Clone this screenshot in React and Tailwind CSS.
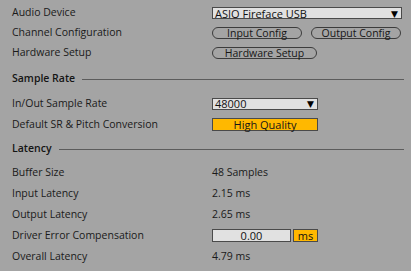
const Row = ({ label, children, h = 'h-[21px]' }) => (
  <div className={`flex items-center ${h}`}>
    <div className="w-[200px] shrink-0 text-[#1a1a1a] font-medium">{label}</div>
    <div className="flex items-center">{children}</div>
  </div>
);

const Heading = ({ children, className = '' }) => (
  <div className={`flex items-center h-[20px] pr-[7px] ${className}`}>
    <span className="font-semibold text-[#141414]">{children}</span>
    <div className="flex-1 h-px bg-[#5c5c5c] ml-[7px]" />
  </div>
);

const Select = ({ value, width }) => (
  <div
    className={`flex items-center justify-between h-[12px] ${width} bg-[#e1e1e1] border border-[#4a4a4a] pl-[2px] pr-[3px] text-[11px] text-[#111] leading-none`}
  >
    <span>{value}</span>
    <span className="text-[9px] text-black">▼</span>
  </div>
);

const Pill = ({ children, width }) => (
  <div
    className={`flex items-center justify-center h-[12px] ${width} rounded-full border border-[#3c3c3c] text-[#161616] font-medium leading-none`}
  >
    {children}
  </div>
);

export default function App() {
  return (
    <div
      className="w-[411px] h-[271px] bg-[#a4a4a4] pl-[12px] pt-[3px] text-[10.5px] overflow-hidden"
      style={{ fontFamily: '"Open Sans", "DejaVu Sans", sans-serif' }}
    >
      <Row label="Audio Device" h="h-[20px]">
        <Select value="ASIO Fireface USB" width="w-[190px]" />
      </Row>
      <Row label="Channel Configuration" h="h-[20px]">
        <div className="flex gap-[9px]">
          <Pill width="w-[90px]">Input Config</Pill>
          <Pill width="w-[90px]">Output Config</Pill>
        </div>
      </Row>
      <Row label="Hardware Setup" h="h-[20px]">
        <Pill width="w-[105px]">Hardware Setup</Pill>
      </Row>

      <Heading className="mt-[6px] mb-[4px]">Sample Rate</Heading>
      <Row label="In/Out Sample Rate">
        <Select value="48000" width="w-[106px]" />
      </Row>
      <Row label="Default SR & Pitch Conversion">
        <div className="flex items-center justify-center h-[13px] w-[106px] bg-[#ffb800] border border-[#4a4a4a] text-[11px] text-[#161616] leading-none">
          High Quality
        </div>
      </Row>

      <Heading className="mt-[4px] mb-[3px]">Latency</Heading>
      <Row label="Buffer Size">
        <span className="text-[#1a1a1a] font-medium">48 Samples</span>
      </Row>
      <Row label="Input Latency">
        <span className="text-[#1a1a1a] font-medium">2.15 ms</span>
      </Row>
      <Row label="Output Latency">
        <span className="text-[#1a1a1a] font-medium">2.65 ms</span>
      </Row>
      <Row label="Driver Error Compensation">
        <div className="flex gap-[2px]">
          <div className="flex items-center justify-center h-[13px] w-[79px] bg-[#e1e1e1] border border-[#4a4a4a] text-[11px] text-[#111] leading-none">
            0.00
          </div>
          <div className="flex items-center justify-center h-[13px] w-[25px] bg-[#ffb800] border border-[#4a4a4a] text-[11px] text-[#111] leading-none">
            ms
          </div>
        </div>
      </Row>
      <Row label="Overall Latency">
        <span className="text-[#1a1a1a] font-medium">4.79 ms</span>
      </Row>
    </div>
  );
}
